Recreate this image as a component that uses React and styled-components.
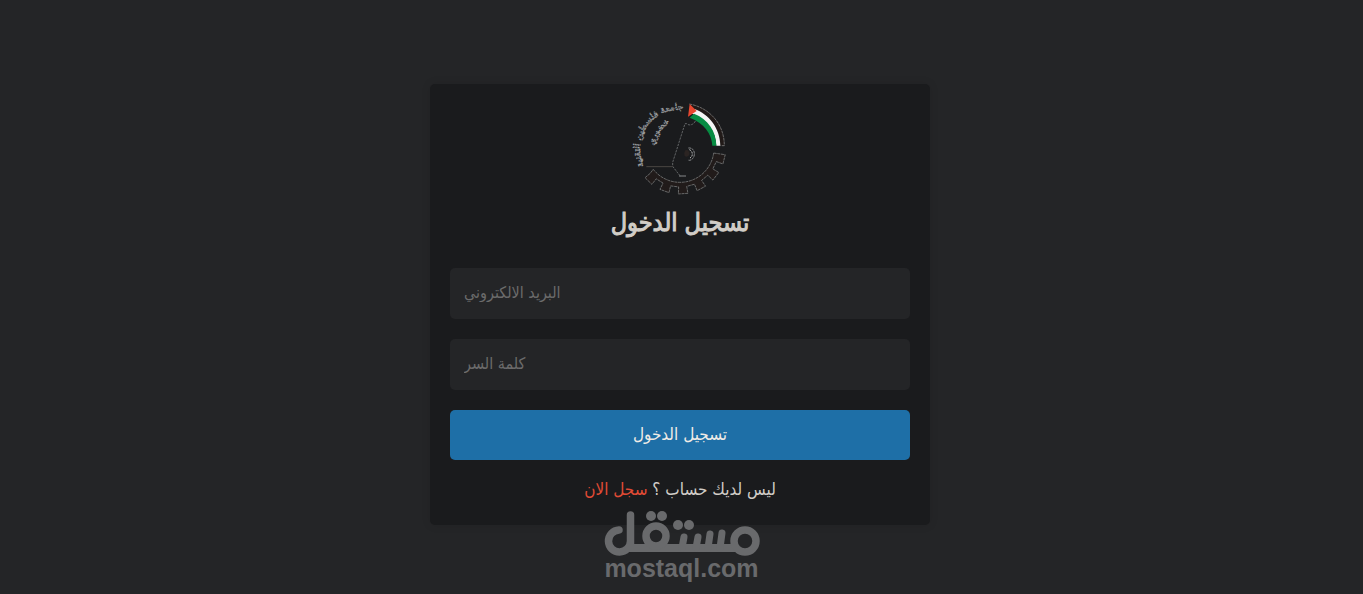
import React from "react";
import styled, { createGlobalStyle } from "styled-components";

const GlobalStyle = createGlobalStyle`
  *, *::before, *::after { box-sizing: border-box; }
  body {
    margin: 0;
    background: #242527;
    color: #d1cdc7;
    font-family: "DejaVu Sans Condensed", "DejaVu Sans", sans-serif;
  }
`;

const Page = styled.main`
  position: relative;
  display: flex;
  flex-direction: column;
  align-items: center;
  min-height: 100vh;
  padding: 84px 3px 12px 0;
`;

const Card = styled.form`
  display: flex;
  flex-direction: column;
  align-items: center;
  gap: 20px;
  width: 100%;
  max-width: 500px;
  padding: 20px 20px 26px;
  border-radius: 5px;
  background: #1a1b1d;
  box-shadow: 0 0 10px rgba(0, 0, 0, 0.1);
`;

const Header = styled.header`
  display: flex;
  flex-direction: column;
  align-items: center;
  gap: 10px;
  padding-bottom: 6px;
`;

const Title = styled.h1`
  margin: 0;
  font-size: 25px;
  line-height: 38px;
  font-weight: 400;
  -webkit-text-stroke: 1px currentColor;
`;

const Crest = styled.svg`
  display: block;
  width: 90px;
  height: 90px;
  overflow: visible;
`;

const Field = styled.input`
  width: 100%;
  height: 51px;
  padding: 0 14px 2px;
  border: 0;
  border-radius: 5px;
  background: #242527;
  color: #d1cdc7;
  font: inherit;
  font-size: 16px;
  &::placeholder { color: #6b6b6b; opacity: 1; }
`;

const Submit = styled.button`
  width: 100%;
  height: 50px;
  padding: 0 0 2px;
  border: 0;
  border-radius: 5px;
  background: #1e6fa7;
  color: #f0ece6;
  font: inherit;
  font-size: 17px;
  cursor: pointer;
`;

const Note = styled.p`
  margin: 0;
  font-size: 17px;
  line-height: 19px;
`;

const SignUp = styled.a`
  color: #e14b35;
  text-decoration: none;
`;

const Watermark = styled.div`
  position: absolute;
  top: 511px;
  left: 0;
  right: 0;
  display: flex;
  flex-direction: column;
  align-items: center;
  color: #696a6c;
  font-family: "Liberation Sans", Arial, sans-serif;
  font-size: 25px;
  line-height: 24px;
  font-weight: 700;
  pointer-events: none;
`;

const Wordmark = styled.svg`
  display: block;
  width: 156px;
  height: 45px;
`;

const point = (r, deg) => {
  const a = (deg * Math.PI) / 180;
  return `${(165 + r * Math.cos(a)).toFixed(1)} ${(160 + r * Math.sin(a)).toFixed(1)}`;
};

const teeth = [14, 38, 62, 86, 110, 134];
const gear = [
  `M${point(102, 8)}`,
  ...teeth.map((t) => `L${point(116, t - 6)}L${point(137, t - 6)}L${point(137, t + 6)}L${point(116, t + 6)}`),
  `L${point(102, 142)}`,
  `A102 102 0 0 0 ${point(102, 8)}Z`,
].join("");

function UniversityCrest() {
  return (
    <Crest viewBox="30 27 270 270" role="img" aria-label="جامعة فلسطين التقنية خضوري">
      <defs>
        <path id="outer-arc" d="M64 226A117 117 0 0 1 190 48" />
        <path id="inner-arc" d="M88 172A86 86 0 0 1 154 78" />
      </defs>
      <g fill="#1a1b1d" stroke="#a4a7aa" strokeWidth="2" strokeDasharray="5 2" fontFamily="DejaVu Sans" fontWeight="400">
        <text fontSize="27" textAnchor="middle">
          <textPath href="#outer-arc" startOffset="50%">جامعة فلسطين التقنية</textPath>
        </text>
        <text fontSize="26" textAnchor="middle">
          <textPath href="#inner-arc" startOffset="50%">خضوري</textPath>
        </text>
      </g>
      <path d={gear} fill="#211b1a" stroke="#8d8f90" strokeWidth="2" strokeDasharray="9 2" />
      <path d="M193 27C250 37 298 84 298 152H286C286 96 250 55 199 39Z" fill="#211a18" />
      <path d="M193 27C250 37 298 84 298 152H287" fill="none" stroke="#929292" strokeWidth="2" strokeDasharray="9 2" />
      <path d="M208 42C252 57 286 101 286 152H274C272 108 246 75 199 55Z" fill="#f5f5f5" />
      <path d="M207 56C249 72 274 109 274 152H262C260 115 237 84 194 68Z" fill="#078c43" />
      <path d="M194 27L215 48L189 65Z" fill="#e8472f" />
      <g fill="none" stroke="#85888a" strokeWidth="2">
        <path d="M211 78C207 88 194 94 185 86L180 86L143 202V214L163 240L168 244" strokeDasharray="7 3" />
        <path d="M162 243H183" strokeWidth="3" />
        <path d="M64 215H143" stroke="#4a4643" strokeWidth="3" />
        <path d="M190 159C205 157 211 172 207 184C203 194 195 198 189 195" strokeWidth="3" strokeDasharray="8 2" />
        <path d="M193 164C205 169 204 185 195 189" stroke="#c0c1c2" strokeWidth="3" strokeDasharray="6 3" />
      </g>
      <path d="M181 166Q192 162 194 177Q189 189 179 183Q176 173 181 166Z" fill="#2b2422" />
    </Crest>
  );
}

function MostaqlMark() {
  return (
    <Wordmark viewBox="0 0 156 45" aria-hidden="true">
      <g fill="none" stroke="currentColor" strokeWidth="7.5" strokeLinecap="round" strokeLinejoin="round">
        <path d="M15 19A11 11 0 1 0 26.5 30V4V37" />
        <path d="M22 37H132" strokeWidth="8" strokeLinecap="butt" />
        <circle cx="52" cy="25" r="10" />
        <circle cx="141" cy="30" r="11" />
        <path d="M80 26L78 37M94 26L92 37M106 23L104 37M118 22L116 37" strokeWidth="7" />
      </g>
      <g fill="currentColor">
        <circle cx="47" cy="5" r="5" />
        <circle cx="58" cy="5" r="5" />
        <circle cx="74" cy="14" r="5" />
        <circle cx="85" cy="14" r="5" />
      </g>
    </Wordmark>
  );
}

export default function App() {
  return (
    <>
      <GlobalStyle />
      <Page>
        <Card lang="ar" onSubmit={(e) => e.preventDefault()}>
          <Header>
            <UniversityCrest />
            <Title>تسجيل الدخول</Title>
          </Header>
          <Field type="email" aria-label="البريد الالكتروني" placeholder="البريد الالكتروني" />
          <Field type="password" aria-label="كلمة السر" placeholder="كلمة السر" />
          <Submit type="submit">تسجيل الدخول</Submit>
          <Note dir="rtl">
            ليس لديك حساب ؟ <SignUp href="#register">سجل الان</SignUp>
          </Note>
        </Card>
        <Watermark>
          <MostaqlMark />
          mostaql.com
        </Watermark>
      </Page>
    </>
  );
}
